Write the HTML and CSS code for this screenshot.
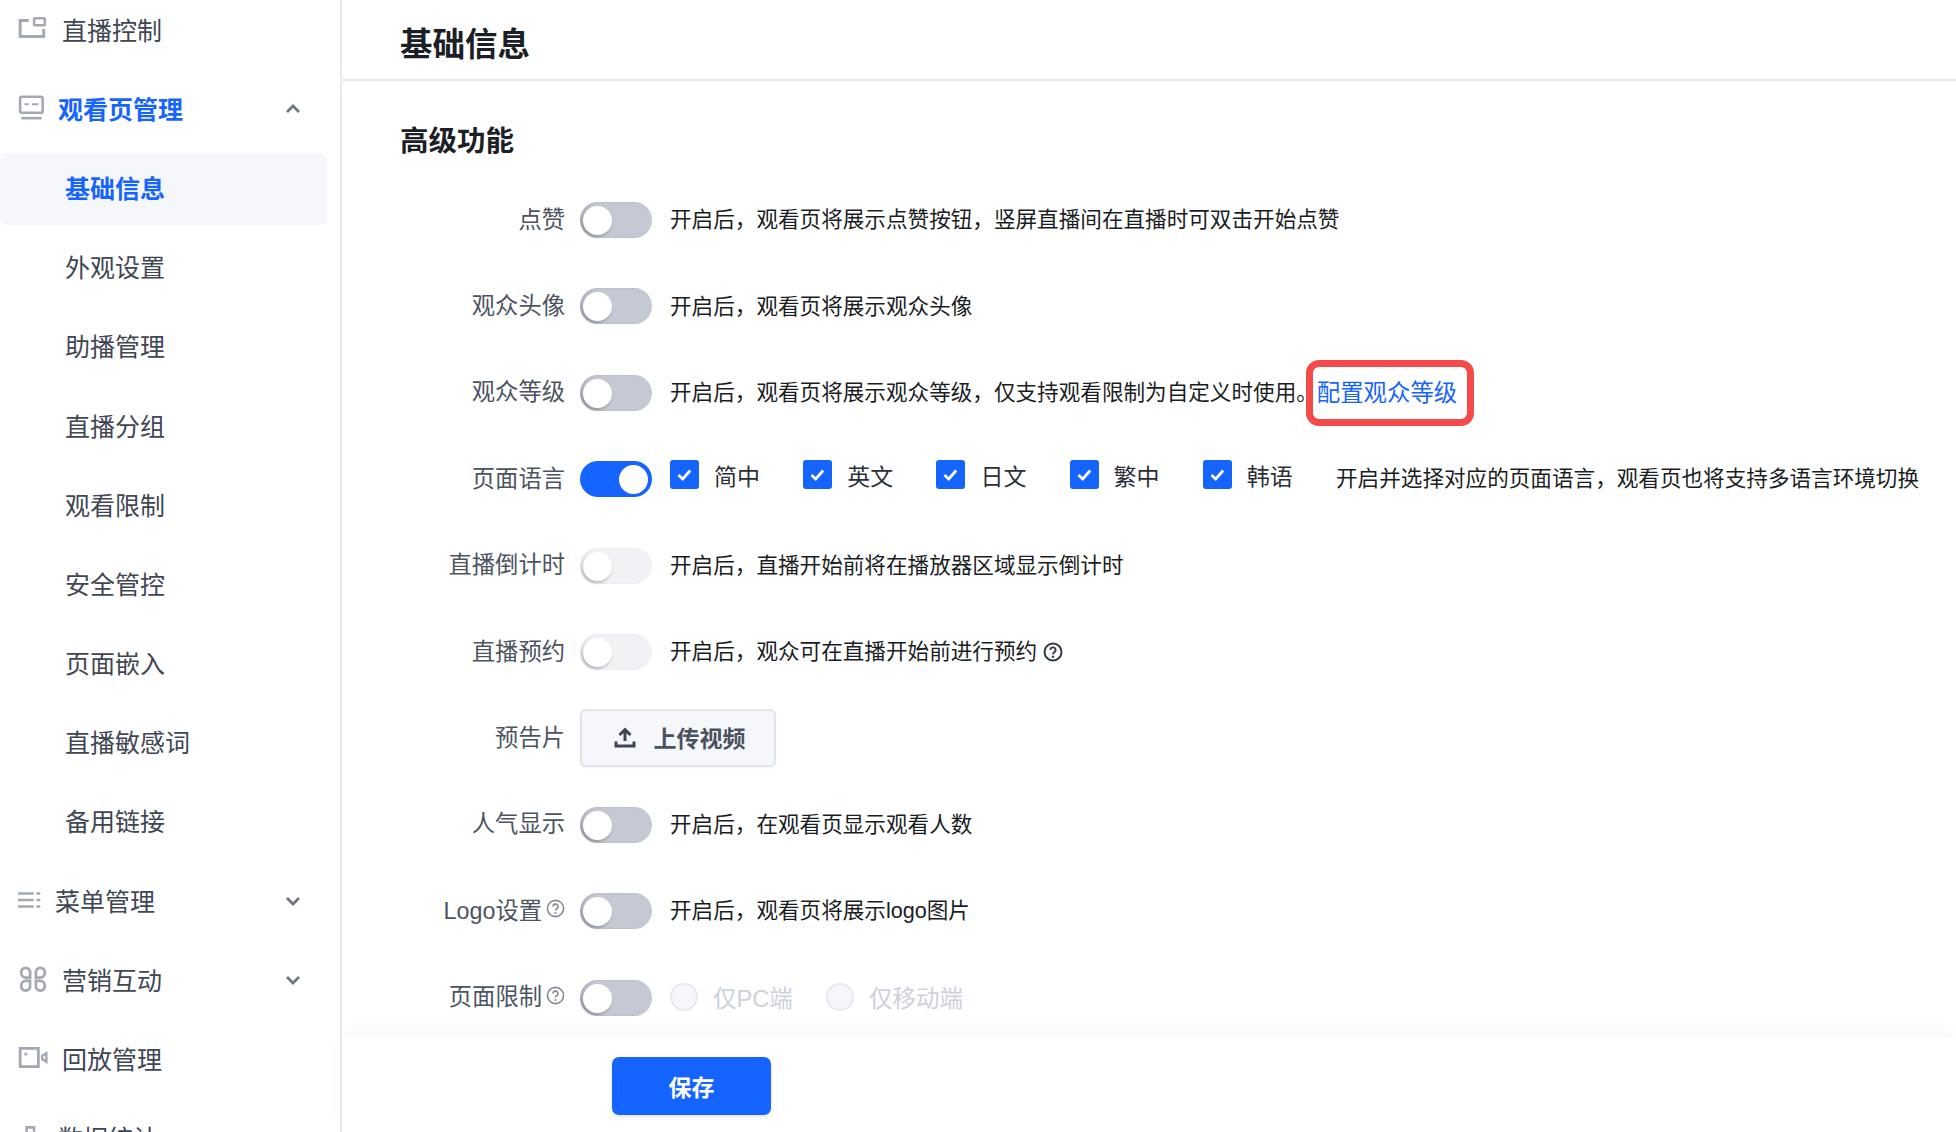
FILE: index.html
```html
<!DOCTYPE html>
<html lang="zh-CN">
<head>
<meta charset="utf-8">
<title>基础信息</title>
<link rel="stylesheet" href="styles.css">
</head>
<body>
<div class="app">
  <aside class="sidebar">
    <div class="nav-item nav-first">
      <svg class="nav-icon icon-w44" viewBox="0 0 28 24"><path d="M10 4H2v15h22v-7" fill="none" stroke="#a3a8b3" stroke-width="2.800"/><rect x="15" y="2" width="10" height="6.500" rx=".6" fill="none" stroke="#a3a8b3" stroke-width="2.400"/></svg>
      <span>直播控制</span>
    </div>
    <div class="nav-item nav-open">
      <svg class="nav-icon icon-w41" viewBox="0 0 28 24"><rect x="2" y="1.500" width="21" height="15" rx="1.500" fill="none" stroke="#a3a8b3" stroke-width="2.400"/><path d="M6 8.500h4M13 8.500h6" stroke="#a3a8b3" stroke-width="2"/><path d="M3 21.500h19" stroke="#a3a8b3" stroke-width="2.400"/></svg>
      <span>观看页管理</span>
      <svg class="chev" viewBox="0 0 16 10"><path d="M2 8l6-6 6 6" fill="none" stroke="#6f7583" stroke-width="2.800"/></svg>
    </div>
    <div class="sub-item sub-active">基础信息</div>
    <div class="sub-item">外观设置</div>
    <div class="sub-item">助播管理</div>
    <div class="sub-item">直播分组</div>
    <div class="sub-item">观看限制</div>
    <div class="sub-item">安全管控</div>
    <div class="sub-item">页面嵌入</div>
    <div class="sub-item">直播敏感词</div>
    <div class="sub-item">备用链接</div>
    <div class="nav-item">
      <svg class="nav-icon icon-w37" viewBox="0 0 28 24"><path d="M0 4h17M20 4h4M0 11h17M20 11h4M0 18h17M20 18h4" transform="translate(0 1)" fill="none" stroke="#a3a8b3" stroke-width="2.600"/></svg>
      <span>菜单管理</span>
      <svg class="chev" viewBox="0 0 16 10"><path d="M2 2l6 6 6-6" fill="none" stroke="#6f7583" stroke-width="2.800"/></svg>
    </div>
    <div class="nav-item">
      <svg class="nav-icon icon-w44" viewBox="0 0 28 24"><g fill="none" stroke="#a3a8b3" stroke-width="2.500"><path d="M3 6.500a4.200 4.200 0 1 1 8.300 0v4.200H7.200A4.200 4.200 0 0 1 3 6.500z"/><path d="M25 6.500a4.200 4.200 0 1 0-8.300 0v4.200h4.100A4.200 4.200 0 0 0 25 6.500z"/><path d="M3 18a4.200 4.200 0 1 0 8.300 0v-4.200H7.200A4.200 4.200 0 0 0 3 18z"/><path d="M25 18a4.200 4.200 0 1 1-8.300 0v-4.200h4.100A4.200 4.200 0 0 1 25 18z"/></g></svg>
      <span>营销互动</span>
      <svg class="chev" viewBox="0 0 16 10"><path d="M2 2l6 6 6-6" fill="none" stroke="#6f7583" stroke-width="2.800"/></svg>
    </div>
    <div class="nav-item">
      <svg class="nav-icon icon-w44" viewBox="0 0 28 24"><rect x="2" y="3" width="17" height="17" fill="none" stroke="#a3a8b3" stroke-width="2.600"/><rect x="6" y="7" width="2.600" height="2.600" fill="#a3a8b3"/><path d="M22.500 10l4-2.500v8l-4-2.500z" fill="none" stroke="#a3a8b3" stroke-width="2.200"/></svg>
      <span>回放管理</span>
    </div>
    <div class="nav-item">
      <svg class="nav-icon icon-w41" viewBox="0 0 28 24"><path d="M8 3h7v18H8zM15 10h8v11h-8z" fill="none" stroke="#a3a8b3" stroke-width="2.400"/></svg>
      <span>数据统计</span>
    </div>
  </aside>

  <main class="main">
    <header class="page-head"><h1 class="page-title">基础信息</h1></header>
    <div class="content">
      <h2 class="section-title">高级功能</h2>
      <div class="form-row">
        <label class="form-label">点赞</label>
        <span class="switch"></span>
        <span class="desc">开启后，观看页将展示点赞按钮，竖屏直播间在直播时可双击开始点赞</span>
      </div>
      <div class="form-row">
        <label class="form-label">观众头像</label>
        <span class="switch"></span>
        <span class="desc">开启后，观看页将展示观众头像</span>
      </div>
      <div class="form-row">
        <label class="form-label">观众等级</label>
        <span class="switch"></span>
        <span class="desc">开启后，观看页将展示观众等级，仅支持观看限制为自定义时使用。</span>
        <a class="link-box">配置观众等级</a>
      </div>
      <div class="form-row">
        <label class="form-label">页面语言</label>
        <span class="switch switch-on"></span>
        <div class="checks">
          <span class="check"><svg class="check-box" viewBox="0 0 29 29"><rect width="29" height="29" rx="3" fill="#1664ff"/><path d="M8.500 15l4.200 4 7.500-8.500" fill="none" stroke="#fff" stroke-width="2.800"/></svg>简中</span>
          <span class="check"><svg class="check-box" viewBox="0 0 29 29"><rect width="29" height="29" rx="3" fill="#1664ff"/><path d="M8.500 15l4.200 4 7.500-8.500" fill="none" stroke="#fff" stroke-width="2.800"/></svg>英文</span>
          <span class="check"><svg class="check-box" viewBox="0 0 29 29"><rect width="29" height="29" rx="3" fill="#1664ff"/><path d="M8.500 15l4.200 4 7.500-8.500" fill="none" stroke="#fff" stroke-width="2.800"/></svg>日文</span>
          <span class="check"><svg class="check-box" viewBox="0 0 29 29"><rect width="29" height="29" rx="3" fill="#1664ff"/><path d="M8.500 15l4.200 4 7.500-8.500" fill="none" stroke="#fff" stroke-width="2.800"/></svg>繁中</span>
          <span class="check"><svg class="check-box" viewBox="0 0 29 29"><rect width="29" height="29" rx="3" fill="#1664ff"/><path d="M8.500 15l4.200 4 7.500-8.500" fill="none" stroke="#fff" stroke-width="2.800"/></svg>韩语</span>
        </div>
        <span class="desc">开启并选择对应的页面语言，观看页也将支持多语言环境切换</span>
      </div>
      <div class="form-row">
        <label class="form-label">直播倒计时</label>
        <span class="switch switch-disabled"></span>
        <span class="desc">开启后，直播开始前将在播放器区域显示倒计时</span>
      </div>
      <div class="form-row">
        <label class="form-label">直播预约</label>
        <span class="switch switch-disabled"></span>
        <span class="desc">开启后，观众可在直播开始前进行预约</span>
        <svg class="help help-dark" viewBox="0 0 20 20"><circle cx="10" cy="10" r="8.500" fill="none" stroke="#333b49" stroke-width="2"/><path d="M7.400 8a2.600 2.600 0 1 1 3.800 2.300c-.8.500-1.200 1-1.200 1.900" fill="none" stroke="#333b49" stroke-width="1.900"/><circle cx="10" cy="14.800" r="1.200" fill="#333b49"/></svg>
      </div>
      <div class="form-row">
        <label class="form-label">预告片</label>
        <button class="upload-btn" type="button">
          <svg class="upload-icon" viewBox="0 0 22 22"><path d="M11 15V3.500M5.500 9l5.500-5.500 5.500 5.500" fill="none" stroke="#3d4555" stroke-width="3"/><path d="M2 15.500v4.500h18v-4.500" fill="none" stroke="#3d4555" stroke-width="3"/></svg>
          上传视频
        </button>
      </div>
      <div class="form-row">
        <label class="form-label">人气显示</label>
        <span class="switch"></span>
        <span class="desc">开启后，在观看页显示观看人数</span>
      </div>
      <div class="form-row">
        <label class="form-label">Logo设置<svg class="help" viewBox="0 0 20 20"><circle cx="10" cy="10" r="8.500" fill="none" stroke="#858b98" stroke-width="1.700"/><path d="M7.400 8a2.600 2.600 0 1 1 3.800 2.300c-.8.500-1.200 1-1.200 1.900" fill="none" stroke="#858b98" stroke-width="1.700"/><circle cx="10" cy="14.800" r="1.100" fill="#858b98"/></svg></label>
        <span class="switch"></span>
        <span class="desc">开启后，观看页将展示logo图片</span>
      </div>
      <div class="form-row">
        <label class="form-label">页面限制<svg class="help" viewBox="0 0 20 20"><circle cx="10" cy="10" r="8.500" fill="none" stroke="#858b98" stroke-width="1.700"/><path d="M7.400 8a2.600 2.600 0 1 1 3.800 2.300c-.8.500-1.200 1-1.200 1.900" fill="none" stroke="#858b98" stroke-width="1.700"/><circle cx="10" cy="14.800" r="1.100" fill="#858b98"/></svg></label>
        <span class="switch"></span>
        <div class="radios">
          <span class="radio"><i class="radio-dot"></i>仅PC端</span>
          <span class="radio"><i class="radio-dot"></i>仅移动端</span>
        </div>
      </div>
    </div>
    <footer class="footer"><button class="save-btn" type="button">保存</button></footer>
  </main>
</div>
</body>
</html>
```

FILE: styles.css
```css
* { box-sizing: border-box; }
html, body { margin: 0; height: 100%; overflow: hidden; background: #fff; }
body { font-family: "Liberation Sans", "Noto Sans CJK SC", sans-serif; color: #1c1f26; }
.app { display: flex; height: 1132px; overflow: hidden; }

.sidebar { flex: none; width: 342px; height: 1132px; border-right: 2px solid #e8e9f5; overflow: hidden; font-size: 25px; color: #3f4654; }
.nav-item { display: flex; align-items: center; height: 79.200px; padding: 0 39px 0 18px; }
.nav-first { margin-top: -11px; }
.nav-open { color: #1664ff; font-weight: 700; }
.nav-item span { white-space: nowrap; }
.nav-icon { flex: none; height: 26px; }
.icon-w44 { width: 30px; margin-right: 14px; }
.icon-w41 { width: 30px; margin-right: 10px; }
.icon-w37 { width: 26px; margin-right: 11px; }
.chev { flex: none; width: 16px; height: 10px; margin-left: auto; margin-top: 2px; }
.sub-item { height: 79.200px; display: flex; align-items: center; padding-left: 65px; white-space: nowrap; }
.sub-active { position: relative; color: #1664ff; font-weight: 700; z-index: 0; }
.sub-active::before { content: ""; position: absolute; z-index: -1; left: 0; top: 6px; width: 327px; height: 72px; background: #f6f7fa; border-radius: 8px; }

.main { flex: 1; min-width: 0; display: flex; flex-direction: column; height: 1132px; }
.page-head { flex: none; height: 81px; border-bottom: 2px solid #e8e9f5; padding: 12px 0 0 58px; display: flex; align-items: center; }
.page-title { margin: 0; font-size: 32.500px; font-weight: 700; color: #1c1f26; line-height: 1; }
.content { flex: 1; min-height: 0; overflow: hidden; }
.section-title { margin: 0; height: 95.800px; padding: 42px 0 0 58px; font-size: 28.500px; font-weight: 700; line-height: 36px; color: #1c1f26; }

.form-row { display: flex; align-items: center; height: 86.400px; white-space: nowrap; }
.form-label { flex: none; width: 223px; margin-right: 15px; display: flex; align-items: center; justify-content: flex-end; font-size: 23.300px; color: #4c5361; padding-bottom: 4.600px; }
.desc { font-size: 21.600px; color: #1a1d24; margin-left: 18px; padding-bottom: 4.600px; }
.link-box { flex: none; font-size: 23.400px; color: #1664ff; margin-left: -12px; border: 7px solid #f54a4a; border-radius: 13px; padding: 0 0 0 4px; height: 66px; line-height: 52px; width: 168px; white-space: nowrap; }

.switch { flex: none; position: relative; width: 72px; height: 36px; border-radius: 18px; background: #c5c9d4; box-shadow: inset 2px 0 2px rgba(90,95,110,.25); }
.switch::after { content: ""; position: absolute; left: 3px; top: 4px; width: 29px; height: 29px; border-radius: 50%; background: #fff; box-shadow: -1px 2px 3px rgba(40,45,60,.3); }
.switch-on { background: #1664ff; box-shadow: none; }
.switch-on::after { left: 39px; box-shadow: none; }
.switch-disabled { background: #f1f2f5; box-shadow: inset 2px 0 2px rgba(90,95,110,.08); }

.checks { flex: none; display: flex; margin-left: 18px; width: 666px; padding-bottom: 9px; font-size: 23px; color: #2a2f3a; }
.check { flex: none; display: inline-flex; align-items: center; width: 133.200px; }
.check-box { flex: none; width: 29px; height: 29px; margin-right: 15px; }
.checks + .desc { margin-left: 0; }

.help { flex: none; width: 19px; height: 19px; margin-left: 4px; }
.help-dark { width: 20px; height: 20px; margin-left: 6px; }

.upload-btn { flex: none; width: 196px; height: 58px; padding: 0 0 2px 3px; display: flex; align-items: center; justify-content: center; gap: 18px; background: #f5f7fa; border: 2px solid #dfe3ec; border-radius: 6px; font: inherit; font-size: 23px; font-weight: 700; color: #4a5160; box-shadow: 0 1px 2px rgba(60,70,90,.08); }
.upload-icon { width: 22px; height: 22px; }

.radios { display: flex; margin-left: 18px; padding-bottom: 1px; font-size: 23.500px; color: #ccd1dc; }
.radio { display: inline-flex; align-items: center; width: 156px; }
.radio-dot { flex: none; width: 28px; height: 28px; border-radius: 50%; background: #f5f7fa; border: 2px solid #e6e9f0; margin-right: 15px; }

.footer { flex: none; height: 95px; padding: 20px 0 0 270px; background: #fff; box-shadow: 0 -6px 16px rgba(0,0,0,.035); position: relative; }
.save-btn { display: block; width: 159px; height: 58px; border: 0; border-radius: 7px; background: #1664ff; color: #fff; font: inherit; font-size: 23px; font-weight: 700; box-shadow: 0 2px 4px rgba(60,70,90,.15); }
```
